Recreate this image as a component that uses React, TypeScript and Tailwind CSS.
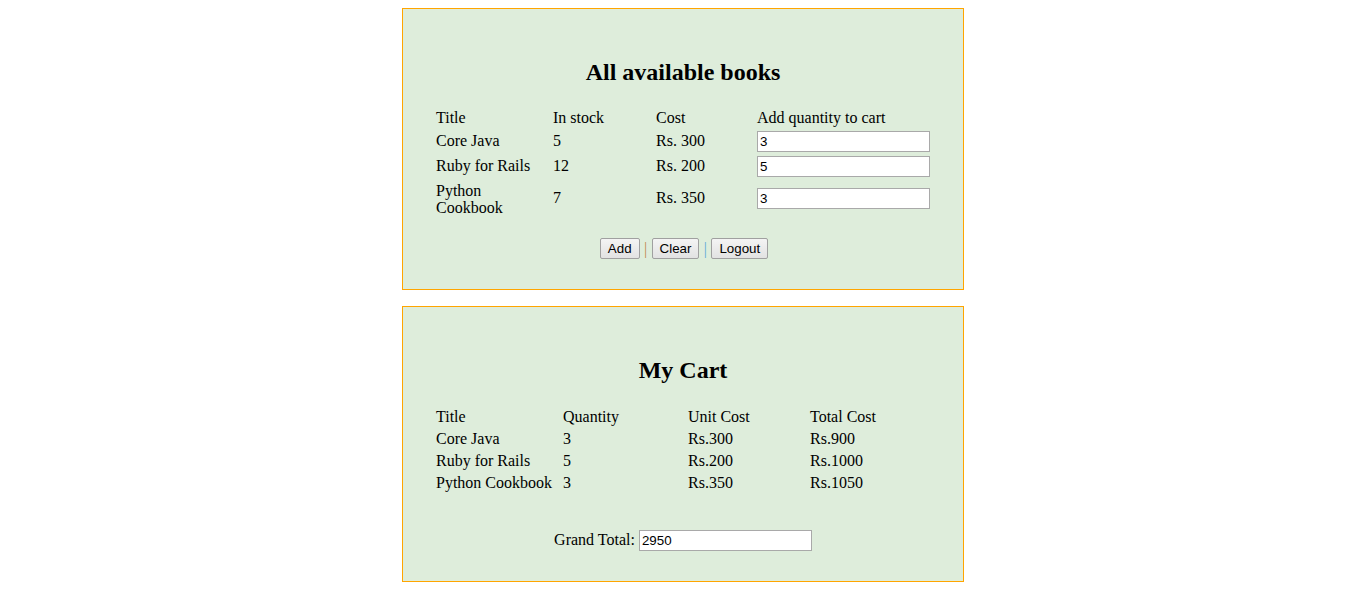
import React from 'react';

const books = [
  { title: ['Core Java'], stock: 5, cost: 'Rs. 300', qty: '3' },
  { title: ['Ruby for Rails'], stock: 12, cost: 'Rs. 200', qty: '5' },
  { title: ['Python', 'Cookbook'], stock: 7, cost: 'Rs. 350', qty: '3' },
];

const cart = [
  { title: 'Core Java', qty: 3, unit: 'Rs.300', total: 'Rs.900' },
  { title: 'Ruby for Rails', qty: 5, unit: 'Rs.200', total: 'Rs.1000' },
  { title: 'Python Cookbook', qty: 3, unit: 'Rs.350', total: 'Rs.1050' },
];

const inputCls =
  "w-[173px] h-[21px] border border-[#a9a9a9] bg-white px-[2px] py-[1px] text-[13.33px] text-black font-['Liberation_Sans',Arial,sans-serif] outline-none";

const btnCls =
  "h-[21px] px-[7px] border border-[#a0a0a0] rounded-[2px] bg-gradient-to-b from-[#f4f4f4] to-[#e2e2e2] text-[13.33px] leading-[17px] text-black font-['Liberation_Sans',Arial,sans-serif]";

function Box({ children }: { children: React.ReactNode }) {
  return (
    <div className="w-[562px] mx-auto border border-[#ffa500] bg-[#deeddb] pt-[49px]">
      {children}
    </div>
  );
}

export default function App() {
  return (
    <div className="min-h-screen bg-white pt-[8px] font-['Liberation_Serif','Times_New_Roman',serif] text-[16px] text-black">
      {/* books list */}
      <Box>
        <h2 className="text-center text-[24px] leading-[28px] font-bold">All available books</h2>
        <div className="mt-[22px] pl-[32px]">
          <div className="grid grid-cols-[117px_103px_101px_175px] items-center">
            <div className="h-[20px] flex items-center px-[1px]">Title</div>
            <div className="h-[20px] flex items-center px-[1px]">In stock</div>
            <div className="h-[20px] flex items-center px-[1px]">Cost</div>
            <div className="h-[20px] flex items-center px-[1px]">Add quantity to cart</div>
            {books.map((b, i) => (
              <React.Fragment key={i}>
                <div className={`${b.title.length > 1 ? 'h-[39px] pt-[2px]' : 'h-[25px]'} flex flex-col justify-center px-[1px] leading-[17px]`}>
                  {b.title.map((t) => (
                    <span key={t}>{t}</span>
                  ))}
                </div>
                <div className="px-[1px]">{b.stock}</div>
                <div className="px-[1px]">{b.cost}</div>
                <div className="px-[1px]">
                  <input className={inputCls} defaultValue={b.qty} />
                </div>
              </React.Fragment>
            ))}
          </div>
        </div>
        <div className="mt-[21px] mb-[30px] flex justify-center items-center pl-[2px]">
          <button className={btnCls}>Add</button>
          <span className="w-[12px] text-center text-[#c08850] leading-[16px]">|</span>
          <button className={btnCls}>Clear</button>
          <span className="w-[12px] text-center text-[#60a8d8] leading-[16px]">|</span>
          <button className={btnCls}>Logout</button>
        </div>
      </Box>

      <div className="h-[16px]" />

      {/* cart */}
      <Box>
        <h2 className="text-center text-[24px] leading-[28px] font-bold">My Cart</h2>
        <div className="mt-[22px] pl-[32px]">
          <div className="grid grid-cols-[127px_125px_122px_122px]">
            {['Title', 'Quantity', 'Unit Cost', 'Total Cost'].map((h) => (
              <div key={h} className="h-[22px] flex items-center px-[1px]">{h}</div>
            ))}
            {cart.map((c) => (
              <React.Fragment key={c.title}>
                <div className="h-[22px] flex items-center px-[1px] whitespace-nowrap">{c.title}</div>
                <div className="h-[22px] flex items-center px-[1px]">{c.qty}</div>
                <div className="h-[22px] flex items-center px-[1px]">{c.unit}</div>
                <div className="h-[22px] flex items-center px-[1px]">{c.total}</div>
              </React.Fragment>
            ))}
          </div>
        </div>
        <div className="mt-[34px] mb-[29px] flex justify-center items-center gap-[4px]">
          <span>Grand Total:</span>
          <input className={inputCls} defaultValue="2950" />
        </div>
      </Box>
    </div>
  );
}
